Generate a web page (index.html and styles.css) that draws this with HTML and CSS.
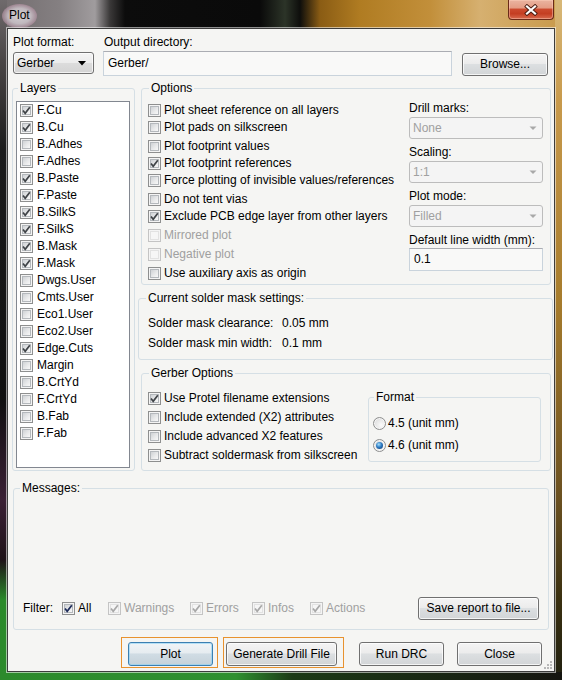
FILE: index.html
```html
<!DOCTYPE html>
<html>
<head>
<meta charset="utf-8">
<title>Plot</title>
<link rel="stylesheet" href="styles.css">
</head>
<body>
<div class="window">
  <div class="titlebar">
    <span class="title">Plot</span>
    <div class="close">
      <svg width="16" height="12" viewBox="0 0 16 12"><path class="x-outline" d="M4 2.5L12 9.5M12 2.5L4 9.5"/><path class="x-fill" d="M4 2.5L12 9.5M12 2.5L4 9.5"/></svg>
    </div>
  </div>
  <div class="client">
    <div class="toprow">
      <div class="fmt">
        <div class="lbl">Plot format:</div>
        <div class="combo"><span>Gerber</span><svg class="arrow" width="8" height="5" viewBox="0 0 8 5"><path d="M0 0H8L4 4.5Z"/></svg></div>
      </div>
      <div class="dir">
        <div class="lbl">Output directory:</div>
        <div class="input">Gerber/</div>
      </div>
      <div class="btn browse">Browse...</div>
    </div>

    <div class="main">
      <fieldset class="group layers">
        <legend>Layers</legend>
        <div class="listbox">
          <div class="item"><span class="cb on"><svg viewBox="0 0 13 13"><path d="M3 6.4l2.2 2.9L9.8 3.2"/></svg></span>F.Cu</div>
          <div class="item"><span class="cb on"><svg viewBox="0 0 13 13"><path d="M3 6.4l2.2 2.9L9.8 3.2"/></svg></span>B.Cu</div>
          <div class="item"><span class="cb"></span>B.Adhes</div>
          <div class="item"><span class="cb"></span>F.Adhes</div>
          <div class="item"><span class="cb on"><svg viewBox="0 0 13 13"><path d="M3 6.4l2.2 2.9L9.8 3.2"/></svg></span>B.Paste</div>
          <div class="item"><span class="cb on"><svg viewBox="0 0 13 13"><path d="M3 6.4l2.2 2.9L9.8 3.2"/></svg></span>F.Paste</div>
          <div class="item"><span class="cb on"><svg viewBox="0 0 13 13"><path d="M3 6.4l2.2 2.9L9.8 3.2"/></svg></span>B.SilkS</div>
          <div class="item"><span class="cb on"><svg viewBox="0 0 13 13"><path d="M3 6.4l2.2 2.9L9.8 3.2"/></svg></span>F.SilkS</div>
          <div class="item"><span class="cb on"><svg viewBox="0 0 13 13"><path d="M3 6.4l2.2 2.9L9.8 3.2"/></svg></span>B.Mask</div>
          <div class="item"><span class="cb on"><svg viewBox="0 0 13 13"><path d="M3 6.4l2.2 2.9L9.8 3.2"/></svg></span>F.Mask</div>
          <div class="item"><span class="cb"></span>Dwgs.User</div>
          <div class="item"><span class="cb"></span>Cmts.User</div>
          <div class="item"><span class="cb"></span>Eco1.User</div>
          <div class="item"><span class="cb"></span>Eco2.User</div>
          <div class="item"><span class="cb on"><svg viewBox="0 0 13 13"><path d="M3 6.4l2.2 2.9L9.8 3.2"/></svg></span>Edge.Cuts</div>
          <div class="item"><span class="cb"></span>Margin</div>
          <div class="item"><span class="cb"></span>B.CrtYd</div>
          <div class="item"><span class="cb"></span>F.CrtYd</div>
          <div class="item"><span class="cb"></span>B.Fab</div>
          <div class="item"><span class="cb"></span>F.Fab</div>
        </div>
      </fieldset>

      <div class="rightcol">
        <fieldset class="group options">
          <legend>Options</legend>
          <div class="optcols">
            <div class="optleft">
              <div class="row"><span class="cb"></span>Plot sheet reference on all layers</div>
              <div class="row"><span class="cb"></span>Plot pads on silkscreen</div>
              <div class="row sp"><span class="cb"></span>Plot footprint values</div>
              <div class="row"><span class="cb on"><svg viewBox="0 0 13 13"><path d="M3 6.4l2.2 2.9L9.8 3.2"/></svg></span>Plot footprint references</div>
              <div class="row"><span class="cb"></span>Force plotting of invisible values/references</div>
              <div class="row sp"><span class="cb"></span>Do not tent vias</div>
              <div class="row"><span class="cb on"><svg viewBox="0 0 13 13"><path d="M3 6.4l2.2 2.9L9.8 3.2"/></svg></span>Exclude PCB edge layer from other layers</div>
              <div class="row sp disabled"><span class="cb"></span>Mirrored plot</div>
              <div class="row sp disabled"><span class="cb"></span>Negative plot</div>
              <div class="row sp"><span class="cb"></span>Use auxiliary axis as origin</div>
            </div>
            <div class="optright">
              <div class="lbl">Drill marks:</div>
              <div class="combo off"><span>None</span><svg class="arrow" width="8" height="5" viewBox="0 0 8 5"><path d="M0.5 0.5H7.5L4 4Z"/></svg></div>
              <div class="lbl gap">Scaling:</div>
              <div class="combo off"><span>1:1</span><svg class="arrow" width="8" height="5" viewBox="0 0 8 5"><path d="M0.5 0.5H7.5L4 4Z"/></svg></div>
              <div class="lbl gap">Plot mode:</div>
              <div class="combo off"><span>Filled</span><svg class="arrow" width="8" height="5" viewBox="0 0 8 5"><path d="M0.5 0.5H7.5L4 4Z"/></svg></div>
              <div class="lbl gap">Default line width (mm):</div>
              <div class="input small">0.1</div>
            </div>
          </div>
        </fieldset>

        <fieldset class="group solder">
          <legend>Current solder mask settings:</legend>
          <div class="srow"><span class="skey">Solder mask clearance:</span><span>0.05 mm</span></div>
          <div class="srow"><span class="skey">Solder mask min width:</span><span>0.1 mm</span></div>
        </fieldset>

        <fieldset class="group gerber">
          <legend>Gerber Options</legend>
          <div class="gcols">
            <div class="gleft">
              <div class="grow"><span class="cb on"><svg viewBox="0 0 13 13"><path d="M3 6.4l2.2 2.9L9.8 3.2"/></svg></span>Use Protel filename extensions</div>
              <div class="grow"><span class="cb"></span>Include extended (X2) attributes</div>
              <div class="grow"><span class="cb"></span>Include advanced X2 features</div>
              <div class="grow"><span class="cb"></span>Subtract soldermask from silkscreen</div>
            </div>
            <fieldset class="group format">
              <legend>Format</legend>
              <div class="rrow"><span class="rb"></span>4.5 (unit mm)</div>
              <div class="rrow"><span class="rb on"></span>4.6 (unit mm)</div>
            </fieldset>
          </div>
        </fieldset>
      </div>
    </div>

    <fieldset class="group messages">
      <legend>Messages:</legend>
      <div class="msgarea"></div>
      <div class="filter">
        <span class="flabel">Filter:</span>
        <span class="fitem all"><span class="cb on strong"><svg viewBox="0 0 13 13"><path d="M3 6.4l2.2 2.9L9.8 3.2"/></svg></span>All</span>
        <span class="fitem warn disabled"><span class="cb on"><svg viewBox="0 0 13 13"><path d="M3 6.4l2.2 2.9L9.8 3.2"/></svg></span>Warnings</span>
        <span class="fitem err disabled"><span class="cb on"><svg viewBox="0 0 13 13"><path d="M3 6.4l2.2 2.9L9.8 3.2"/></svg></span>Errors</span>
        <span class="fitem info disabled"><span class="cb on"><svg viewBox="0 0 13 13"><path d="M3 6.4l2.2 2.9L9.8 3.2"/></svg></span>Infos</span>
        <span class="fitem act disabled"><span class="cb on"><svg viewBox="0 0 13 13"><path d="M3 6.4l2.2 2.9L9.8 3.2"/></svg></span>Actions</span>
        <span class="btn save">Save report to file...</span>
      </div>
    </fieldset>

    <div class="buttons">
      <div class="focusbox plotbox"><div class="btn default plot">Plot</div></div>
      <div class="focusbox drillbox"><div class="btn drill">Generate Drill File</div></div>
      <div class="btn drc">Run DRC</div>
      <div class="btn closebtn">Close</div>
    </div>

    <svg class="grip" width="10" height="10" viewBox="0 0 10 10">
      <rect x="7" y="1" width="2" height="2"/><rect x="4" y="4" width="2" height="2"/><rect x="7" y="4" width="2" height="2"/>
      <rect x="1" y="7" width="2" height="2"/><rect x="4" y="7" width="2" height="2"/><rect x="7" y="7" width="2" height="2"/>
    </svg>
  </div>
</div>
</body>
</html>
```

FILE: styles.css
```css
html, body {
  margin: 0;
  padding: 0;
}
body {
  width: 562px;
  height: 680px;
  overflow: hidden;
  font-family: "Liberation Sans", Arial, sans-serif;
  font-size: 12px;
  line-height: 15px;
  color: #000;
}

/* ---------- window frame ---------- */
.window {
  width: 562px;
  height: 680px;
  display: flex;
  flex-direction: column;
  background:
    linear-gradient(90deg, #2c8a2c 0%, #2f9030 42%, #1c3a16 52%, #151510 100%) left bottom / 100% 8px no-repeat,
    linear-gradient(180deg, #6f6a6c 0, #4a4646 60px, #1c1c1c 150px, #101010 400px, #3a2035 500px, #1e1218 560px, #2a8a2a 600px, #2c8a2c 100%) left top / 7px 100% no-repeat,
    linear-gradient(180deg, #d8b878 0, #c89a4c 100px, #a77c2c 300px, #6a5020 500px, #3a3010 600px, #202010 100%) right top / 7px 100% no-repeat,
    linear-gradient(90deg, #726c6e 0, #858082 60px, #a09c9e 95px, #3a3838 110px, #0c0c0c 125px, #0a0a0a 260px, #2c3428 285px, #0e0e0c 300px, #8a5c14 320px, #b07c22 360px, #c28f3a 430px, #d6b070 480px, #cfa45c 520px, #c89a4c 562px);
}
.titlebar {
  height: 28px;
  flex: none;
  display: flex;
  justify-content: space-between;
  align-items: flex-start;
}
.title {
  margin: 4px 0 0 2px;
  padding: 4px 7px 5px;
  border-radius: 50%;
  background: radial-gradient(ellipse at center, rgba(214,210,214,0.95) 0%, rgba(200,192,198,0.9) 45%, rgba(190,150,170,0.55) 70%, rgba(160,120,140,0) 100%);
  color: #000;
}
.close {
  width: 46px;
  height: 20px;
  margin-right: 8px;
  box-sizing: border-box;
  border: 1px solid #6a2a18;
  border-top: none;
  border-radius: 0 0 4px 4px;
  background: linear-gradient(180deg, #eab4a0 0%, #e49c84 42%, #cc4a2e 48%, #c43e22 72%, #d86a4e 100%);
  box-shadow: inset 0 0 0 1px rgba(255,210,190,0.45);
  display: flex;
  align-items: center;
  justify-content: center;
}
.x-outline { stroke: #4a1c10; stroke-width: 4; stroke-linecap: square; fill: none; }
.x-fill { stroke: #fff; stroke-width: 2.2; stroke-linecap: square; fill: none; }

/* ---------- client area ---------- */
.client {
  position: relative;
  margin: 0 7px;
  height: 644px;
  box-sizing: border-box;
  border: 1px solid #3c3c3c;
  box-shadow: 0 0 0 1px rgba(255,255,255,0.55);
  background: #f5f5f3;
}

.lbl { line-height: 15px; white-space: nowrap; }

.toprow {
  display: flex;
  align-items: flex-start;
  padding: 6px 0 0 5px;
}
.fmt { width: 81px; }
.fmt .combo { margin-top: 2px; }
.dir { width: 349px; margin-left: 9px; }
.dir .lbl { padding-left: 1px; }
.dir .input { margin-top: 1px; height: 25px; padding-left: 4px; }
.browse { margin: 18px 0 0 10px; width: 86px; height: 23px; }

/* combo boxes */
.combo {
  height: 22px;
  box-sizing: border-box;
  border: 1px solid #707070;
  border-radius: 3px;
  background: linear-gradient(180deg, #f4f4f4 0%, #ececec 48%, #dcdcdc 52%, #d4d4d4 100%);
  box-shadow: inset 0 0 0 1px rgba(255,255,255,0.7);
  display: flex;
  align-items: center;
  justify-content: space-between;
  padding: 0 7px 0 3px;
}
.combo .arrow path { fill: #000; }
.combo.off {
  border-color: #bcbcbc;
  background: #f4f4f4;
  box-shadow: none;
  color: #a0a0a0;
  padding: 0 5px 0 3px;
}
.combo.off .arrow path { fill: #a8a8a8; }

/* text inputs */
.input {
  box-sizing: border-box;
  border: 1px solid #c9d3dc;
  border-top-color: #abadb3;
  background: #f9f9f8;
  display: flex;
  align-items: center;
  padding-left: 3px;
}

/* buttons */
.btn {
  box-sizing: border-box;
  border: 1px solid #707070;
  border-radius: 3px;
  background: linear-gradient(180deg, #f4f4f4 0%, #ececec 45%, #dcdfe1 50%, #d2d5d7 100%);
  box-shadow: inset 0 0 0 1px rgba(255,255,255,0.75);
  display: flex;
  align-items: center;
  justify-content: center;
  white-space: nowrap;
}
.btn.default {
  border-color: #3c7fb1;
  background: linear-gradient(180deg, #f0f4f7 0%, #e6ecf0 45%, #d0dce4 50%, #c6d2da 100%);
  box-shadow: inset 0 0 0 1px rgba(140,210,245,0.6);
}

/* group boxes */
.group {
  margin: 0;
  min-width: 0;
  box-sizing: border-box;
  border: 1px solid #d5dfe5;
  border-radius: 3px;
}
.group > legend {
  padding: 0 2px;
  line-height: 15px;
}

/* checkboxes */
.cb {
  position: relative;
  flex: none;
  display: inline-block;
  width: 13px;
  height: 13px;
  box-sizing: border-box;
  border: 1px solid #8e8f8f;
  background: #f4f4f4;
}
.cb::before {
  content: "";
  position: absolute;
  left: 1px;
  top: 1px;
  right: 1px;
  bottom: 1px;
  border: 1px solid #b4b8bc;
  background: linear-gradient(135deg, #cfd2d5 0%, #e8e9ea 55%, #f8f8f8 100%);
}
.cb svg {
  position: absolute;
  left: -1px;
  top: -1px;
  width: 13px;
  height: 13px;
}
.cb svg path {
  fill: none;
  stroke: #404448;
  stroke-width: 1.7;
}
.cb.strong svg path { stroke: #1e2c5a; }
.disabled { color: #a0a0a0; }
.disabled .cb { border-color: #c4c4c4; }
.disabled .cb::before { border-color: #e2e2e2; background: #f6f6f6; }
.disabled .cb svg path { stroke: #a8a8a8; }

/* radio buttons */
.rb {
  position: relative;
  flex: none;
  display: inline-block;
  width: 13px;
  height: 13px;
  box-sizing: border-box;
  border: 1px solid #8e8f8f;
  border-radius: 50%;
  background: radial-gradient(circle at 65% 65%, #fbfbfb 0%, #e4e4e4 60%, #cfcfcf 100%);
  box-shadow: inset 0 0 0 1px #f6f6f6;
}
.rb.on::after {
  content: "";
  position: absolute;
  left: 2px;
  top: 2px;
  width: 7px;
  height: 7px;
  border-radius: 50%;
  background: radial-gradient(circle at 40% 35%, #a6e0fb 0%, #2f7cc4 45%, #123f78 90%);
}

/* ---------- main area ---------- */
.main {
  display: flex;
  align-items: flex-start;
  margin-top: 5px;
  padding-left: 4px;
}
.layers {
  width: 123px;
  padding: 5px 4px 2px 3px;
}
.layers > legend { margin-left: 2px; }
.listbox {
  width: 114px;
  height: 367px;
  box-sizing: border-box;
  border: 1px solid #828790;
  background: #fff;
}
.item {
  height: 17px;
  display: flex;
  align-items: center;
  padding-left: 3px;
  gap: 4px;
  white-space: nowrap;
}

.rightcol {
  margin-left: 3px;
  width: 416px;
}
.options {
  margin-left: 3px;
  width: 410px;
  padding: 6px 7px 2px 6px;
}
.options > legend { margin-left: 1px; }
.optcols { display: flex; }
.optleft { flex: 1; }
.row {
  height: 17px;
  display: flex;
  align-items: center;
  gap: 3px;
  white-space: nowrap;
}
.row.sp { margin-top: 2px; }
.optright {
  width: 134px;
  margin-top: -1px;
}
.optright .combo { margin-top: 1px; }
.optright .lbl.gap { margin-top: 6px; }
.input.small { height: 23px; padding-left: 4px; }

.solder {
  margin-top: 6px;
  width: 415px;
  padding: 7px 6px 6px 9px;
}
.solder > legend { margin-left: -2px; }
.srow { height: 20px; display: flex; align-items: center; white-space: nowrap; }
.skey { width: 134px; }

.gerber {
  margin: 6px 0 0 3px;
  width: 410px;
  padding: 8px 9px 5px 6px;
}
.gerber > legend { margin-left: 1px; }
.gcols { display: flex; align-items: flex-start; }
.gleft { width: 220px; }
.grow {
  height: 19px;
  display: flex;
  align-items: center;
  gap: 3px;
  white-space: nowrap;
}
.format {
  margin-top: 1px;
  width: 173px;
  padding: 7px 4px 5px 4px;
}
.format > legend { margin-left: 1px; }
.rrow {
  height: 22px;
  display: flex;
  align-items: center;
  gap: 2px;
  white-space: nowrap;
}

/* ---------- messages ---------- */
.messages {
  margin: 10px 0 0 5px;
  width: 536px;
  padding: 0 9px 9px 9px;
}
.messages > legend { margin-left: -3px; }
.msgarea { height: 100px; }
.filter {
  height: 24px;
  display: flex;
  align-items: center;
  white-space: nowrap;
}
.flabel { width: 39px; }
.fitem { display: flex; align-items: center; gap: 3px; }
.fitem.all { width: 46px; }
.fitem.warn { width: 82px; }
.fitem.err { width: 62px; }
.fitem.info { width: 58px; }
.save {
  margin-left: auto;
  width: 121px;
  height: 23px;
}

/* ---------- bottom buttons ---------- */
.buttons {
  display: flex;
  align-items: flex-start;
  margin-top: 7px;
}
.focusbox {
  box-sizing: border-box;
  border: 1px solid #e8922e;
  height: 31px;
}
.plotbox {
  margin-left: 113px;
  padding: 4px 4px 1px 6px;
}
.drillbox {
  margin-left: 5px;
  padding: 4px 6px 1px 2px;
}
.plot, .drc, .closebtn { width: 85px; height: 24px; }
.drill { width: 111px; height: 24px; }
.drc { margin: 5px 0 0 15px; }
.closebtn { margin: 5px 0 0 13px; }

.grip {
  position: absolute;
  right: 1px;
  bottom: 1px;
  fill: #b8b8b8;
}
```
